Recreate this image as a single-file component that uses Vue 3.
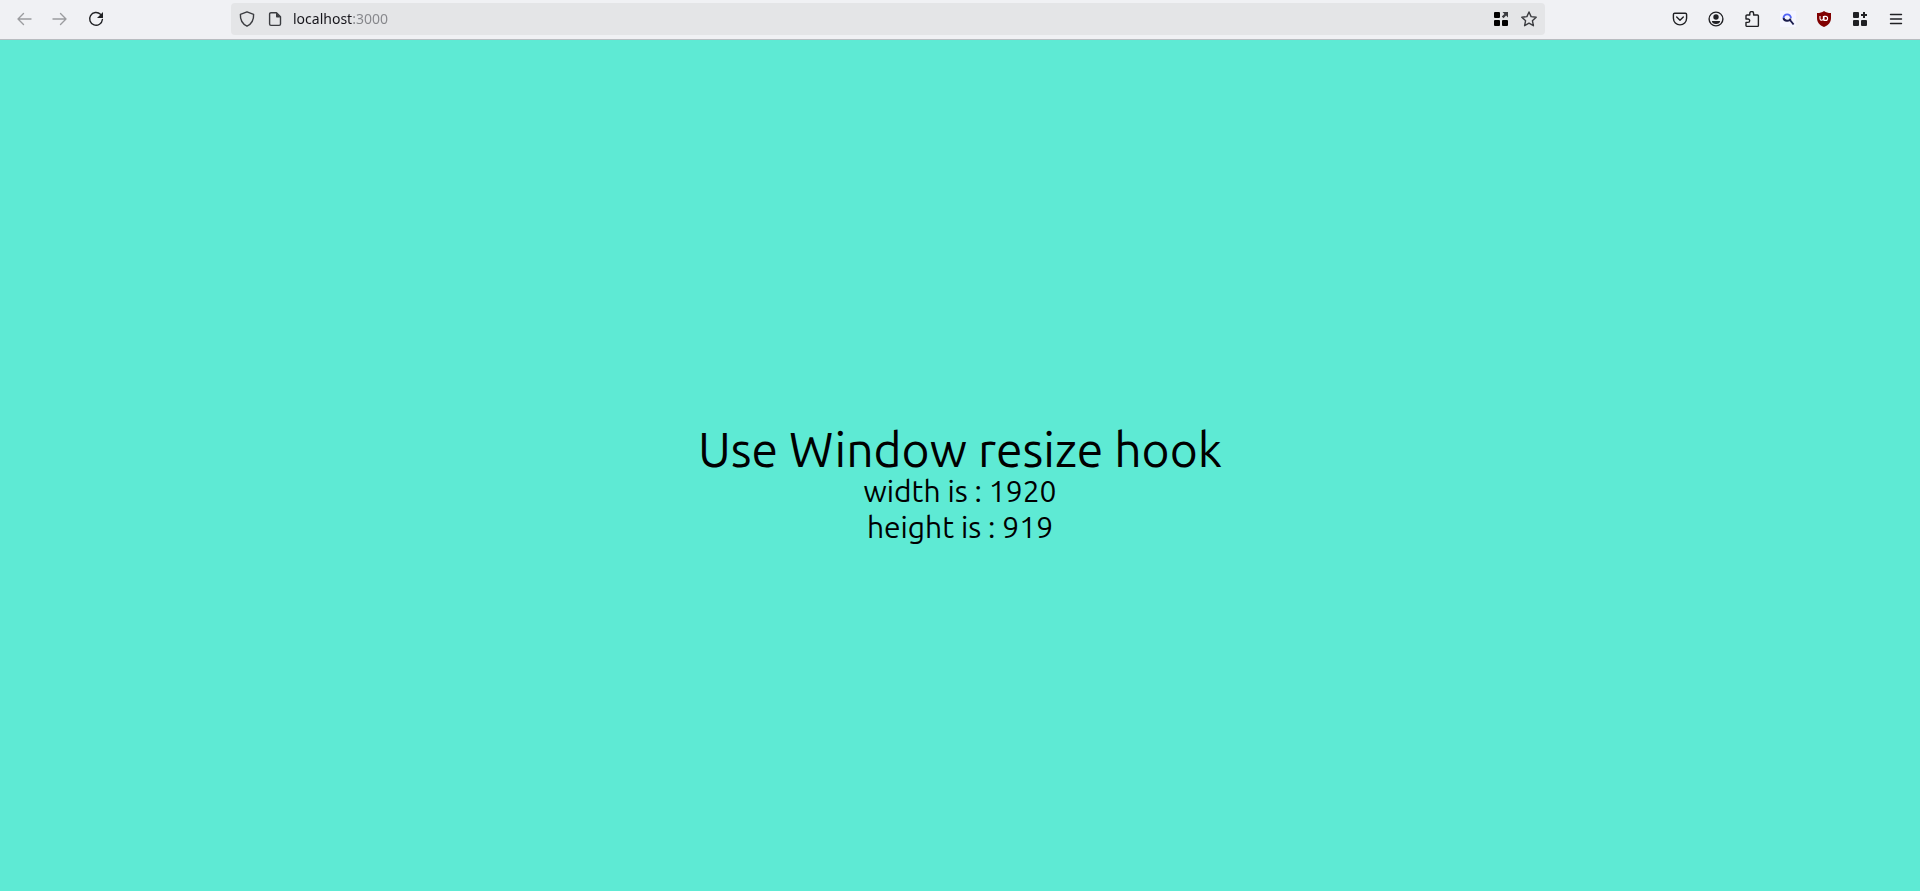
<script setup>
import { ref } from 'vue'

const address = ref('localhost:3000')
const width = ref(1920)
const height = ref(919)
</script>

<template>
  <div class="browser">
    <header class="toolbar">
      <nav class="group" aria-label="Navigation">
        <button class="tool faded" aria-label="Back">
          <svg viewBox="0 0 16 16"><path class="line" d="M15 8H2M7.500 2.500 2 8l5.500 5.500" /></svg>
        </button>
        <button class="tool faded" aria-label="Forward">
          <svg viewBox="0 0 16 16"><path class="line" d="M1 8h13M8.500 2.500 14 8l-5.500 5.500" /></svg>
        </button>
        <button class="tool" aria-label="Reload">
          <svg viewBox="0 0 16 16"><path class="line" d="M12.500 3.300A6.400 6.400 0 1 0 14.400 8.500" /><path d="M15 1v5.400a.6.6 0 0 1-.6.6H9z" /></svg>
        </button>
      </nav>

      <div class="urlbar">
        <button class="mini" aria-label="Site protection">
          <svg viewBox="0 0 16 16"><path class="line" d="M8 .8 14.600 3.300C14.900 8.600 13 12.800 8 15.200 3 12.800 1.100 8.600 1.400 3.300z" /></svg>
        </button>
        <button class="mini" aria-label="Site information">
          <svg viewBox="0 0 16 16"><path class="line" d="M4 1.700h5.500l4 4V13a1.400 1.400 0 0 1-1.400 1.400H4A1.400 1.400 0 0 1 2.600 13V3.100A1.400 1.400 0 0 1 4 1.700z" /><path d="M9 1.500v4.200c0 .4.300.7.700.7h4.100z" /></svg>
        </button>
        <input v-model="address" class="address" type="text" aria-label="Address" spellcheck="false" />
        <button class="mini" aria-label="Open apps">
          <svg class="black" viewBox="0 0 16 16"><rect x="1" y="1" width="6" height="6" rx="1" /><rect x="1" y="9" width="6" height="6" rx="1" /><rect x="9" y="9" width="6" height="6" rx="1" /><path class="arrow" d="M9.500 1H15v5.500l-1.900-1.900L10.500 7.200 8.800 5.500l2.600-2.600z" /></svg>
        </button>
        <button class="mini" aria-label="Bookmark this page">
          <svg viewBox="0 0 16 16"><path class="line" d="m8 1 2.100 4.600 5.100.6-3.800 3.500 1 5L8 12.200l-4.400 2.500 1-5L.8 6.200l5.100-.6z" /></svg>
        </button>
      </div>

      <div class="group">
        <button class="tool" aria-label="Save to Pocket">
          <svg viewBox="0 0 16 16"><path class="line" d="M2.700 2.200h10.600c.8 0 1.300.5 1.300 1.300v3.800a6.600 6.600 0 0 1-13.200 0V3.500c0-.8.500-1.300 1.300-1.300z" /><path class="line" d="m4.700 6 3.300 3.200L11.300 6" /></svg>
        </button>
        <button class="tool" aria-label="Account">
          <svg viewBox="0 0 16 16"><circle class="line" cx="8" cy="8" r="6.900" /><circle cx="8" cy="6" r="2.700" /><path d="M3.900 10h8.200c0 2-1.700 3-4.100 3s-4.100-1-4.100-3z" /></svg>
        </button>
        <button class="tool" aria-label="Extensions">
          <svg viewBox="0 0 16 16"><path class="line" d="M5.800 4V2.400a1.900 1.900 0 0 1 3.800 0V4h3.800c.6 0 1 .4 1 1v9.400c0 .6-.4 1-1 1H3c-.6 0-1-.4-1-1v-3h2a1.700 1.700 0 0 0 0-3.400H2V5c0-.6.4-1 1-1z" /></svg>
        </button>
        <button class="tool" aria-label="Search">
          <svg viewBox="0 0 16 16"><rect width="16" height="16" fill="#f4f5ff" /><path d="M3.500 7a3.700 3.700 0 1 1 7.400 0" fill="none" stroke="#5063f5" stroke-width="1.800" /><path d="M3.500 7c.5 3.200 6 3.800 7.200.5M10 9l3.600 4.500" fill="none" stroke="#1b1d4d" stroke-width="1.900" /></svg>
        </button>
        <button class="tool" aria-label="Content blocker">
          <svg viewBox="0 0 16 16"><path d="M8 0c2 1.500 4 2 7 2v5c0 4.500-2.500 7-7 9-4.500-2-7-4.500-7-9V2c3 0 5-.5 7-2z" fill="#800000" /><path d="M4 5v2.600a1.700 1.700 0 0 0 3.400 0V5M8 5v4.400h1.600a2 2 0 0 0 0-4H8" fill="none" stroke="#fff" stroke-width="1.100" /></svg>
        </button>
        <button class="tool" aria-label="Add apps">
          <svg viewBox="0 0 16 16"><rect x="1" y="1" width="6" height="6" rx="1" /><rect x="1" y="9" width="6" height="6" rx="1" /><rect x="9" y="9" width="6" height="6" rx="1" /><path d="M11 1h2v2h2v2h-2v2h-2V5H9V3h2z" /></svg>
        </button>
        <button class="tool" aria-label="Menu">
          <svg viewBox="0 0 16 16"><path class="line" d="M2.500 3.500h11M2.500 8h11M2.500 12.500h11" /></svg>
        </button>
      </div>
    </header>

    <main class="page">
      <h1>Use Window resize hook</h1>
      <p>width is : {{ width }}</p>
      <p>height is : {{ height }}</p>
    </main>
  </div>
</template>

<style>
body {
  margin: 0;
}
</style>

<style scoped>
.browser {
  display: flex;
  flex-direction: column;
  min-height: 100vh;
  background: #5eead4;
  font-family: Ubuntu, "Noto Sans", sans-serif;
}

.toolbar {
  display: flex;
  align-items: center;
  justify-content: space-between;
  gap: 117px;
  padding: 3px 6px 4px;
  border-bottom: 1px solid #b9bcc0;
  background: #f0f1f4;
}

.group {
  display: flex;
}

button {
  display: flex;
  align-items: center;
  justify-content: center;
  height: 32px;
  padding: 0;
  border: 0;
  background: none;
  color: #202124;
}

.tool {
  width: 36px;
}

.mini {
  width: 28px;
  color: #3b3c40;
}

.faded {
  color: #9b9c9f;
}

svg {
  width: 16px;
  height: 16px;
  fill: currentColor;
}

.line {
  fill: none;
  stroke: currentColor;
  stroke-width: 1.4;
  stroke-linecap: round;
  stroke-linejoin: round;
}

.black {
  color: #000;
}

.arrow {
  fill: #3b3c40;
}

.urlbar {
  display: flex;
  flex: 1;
  min-width: 0;
  align-items: center;
  padding: 0 2px;
  border-radius: 4px;
  background: #e4e5e7;
}

.address {
  box-sizing: border-box;
  flex: 1;
  min-width: 0;
  height: 32px;
  margin-left: 4px;
  padding: 0 0 2px;
  border: 0;
  outline: 0;
  background: linear-gradient(to right, #15141a 59px, #85868a 59px);
  background-clip: text;
  color: transparent;
  font: 14px/20px "Noto Sans", sans-serif;
}

.page {
  display: flex;
  flex: 1;
  flex-direction: column;
  align-items: center;
  justify-content: center;
  padding-top: 39px;
  color: #000;
  text-align: center;
}

h1 {
  margin: 0;
  font-size: 48px;
  font-weight: 400;
  line-height: 48px;
}

p {
  margin: 0;
  font-size: 30px;
  font-weight: 400;
  line-height: 36px;
}
</style>
